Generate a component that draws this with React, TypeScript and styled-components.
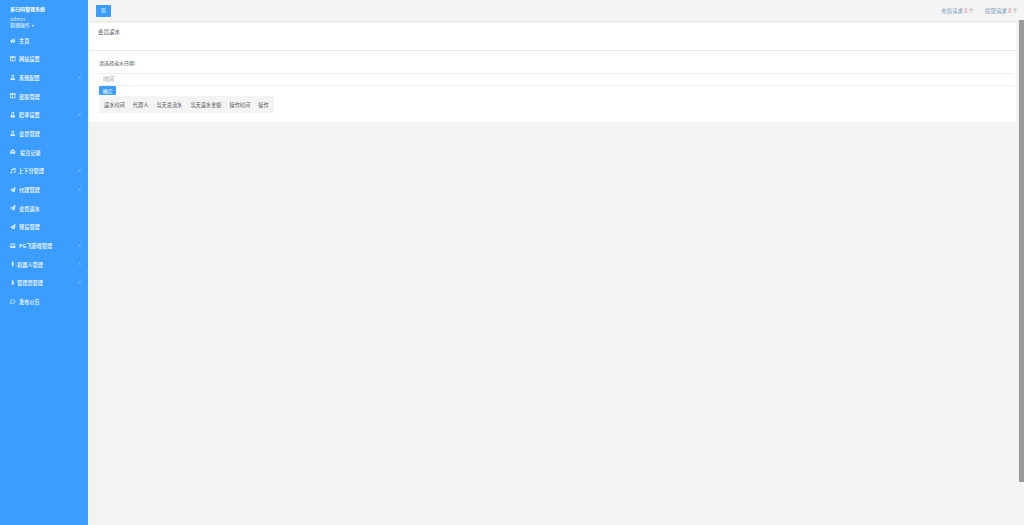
import styled, { createGlobalStyle } from 'styled-components'
import {
  FaBars,
  FaChevronLeft,
  FaColumns,
  FaCreditCard,
  FaFlask,
  FaHome,
  FaMale,
  FaMusic,
  FaPaperPlane,
  FaRegCommentDots,
  FaTaxi,
} from 'react-icons/fa'

const GlobalStyle = createGlobalStyle`
  html, body {
    margin: 0;
    height: 100%;
    overflow: hidden;
  }
  body {
    font-family: "Noto Sans CJK SC", "Liberation Sans", sans-serif;
    background: #f4f3f4;
    color: #676a6c;
  }
`

const Page = styled.div`
  display: flex;
  height: 525px;
  position: relative;
`

const Sidebar = styled.nav`
  width: 88px;
  flex-shrink: 0;
  background: #3a9dff;
  color: #fff;
`

const Profile = styled.div`
  padding: 6px 10px 0;
  height: 25px;
  font-size: 5px;
  line-height: 6px;
`

const Brand = styled.div`
  font-weight: 700;
  margin-bottom: 4px;
`

const Muted = styled.div`
  color: #dcecff;
`

const Caret = styled.span`
  display: inline-block;
  margin-left: 2px;
  border-left: 1.5px solid transparent;
  border-right: 1.5px solid transparent;
  border-top: 2px solid #fff;
  vertical-align: middle;
`

const MenuList = styled.ul`
  list-style: none;
  margin: 0;
  padding: 0;
`

const MenuItem = styled.li`
  display: flex;
  align-items: center;
  height: 18.65px;
  padding: 0 7px 0 10px;
  font-size: 5.2px;
  font-weight: 700;
  color: #e3f0ff;
`

const ItemIcon = styled.span<{ $width: number }>`
  width: ${(p) => p.$width}px;
  display: inline-flex;
  align-items: center;
  font-size: 5.5px;
`

const ItemLabel = styled.span`
  flex: 1;
`

const Arrow = styled(FaChevronLeft)`
  font-size: 3.5px;
  opacity: 0.7;
`

const Main = styled.div`
  flex: 1;
  min-width: 0;
  display: flex;
  flex-direction: column;
`

const TopBar = styled.header`
  height: 21px;
  flex-shrink: 0;
  display: flex;
  align-items: center;
  justify-content: space-between;
  padding: 0 6px 0 8px;
  background: #f3f4f3;
  border-bottom: 1px solid #e7eaec;
`

const MenuButton = styled.button`
  width: 15px;
  height: 12px;
  padding: 0;
  border: 0;
  border-radius: 1px;
  background: #3a9dff;
  color: #fff;
  font-size: 5px;
  display: flex;
  align-items: center;
  justify-content: center;
`

const Requests = styled.div`
  display: flex;
  gap: 11px;
  font-size: 5.5px;
  color: #7b9cbd;
`

const Count = styled.b`
  color: #e77;
  font-weight: 400;
`

const Unit = styled.span`
  color: #999;
`

const Card = styled.section`
  margin: 1px 8px 0 2px;
  background: #fff;
`

const CardTitle = styled.h5`
  margin: 0;
  height: 28px;
  padding: 5px 8px 0;
  box-sizing: border-box;
  font-size: 5.5px;
  line-height: 8px;
  font-weight: 400;
  color: #555;
  border-bottom: 1px solid #e7eaec;
`

const CardBody = styled.div`
  padding: 8px 9px 9px;
`

const Prompt = styled.label`
  display: block;
  font-size: 5px;
  line-height: 7px;
  margin-bottom: 7px;
  color: #555;
`

const DateInput = styled.div`
  height: 11px;
  padding: 0 5px;
  margin: 0 -7px 0 -1px;
  font-size: 5.5px;
  line-height: 11px;
  color: #999;
  background: #fff;
  border-top: 1px solid #eee;
  border-bottom: 1px solid #eee;
`

const Confirm = styled.button`
  display: block;
  width: 17px;
  height: 9px;
  padding: 0;
  border: 0;
  border-radius: 1px;
  background: #3a9dff;
  color: #fff;
  font: inherit;
  font-size: 5px;
  line-height: 9px;
`

const Table = styled.div`
  display: flex;
  width: fit-content;
  gap: 8px;
  height: 17px;
  align-items: center;
  padding: 0 5px;
  margin-top: 1px;
  background: #f4f4f5;
  font-size: 5.2px;
  color: #555;
`

const Scrollbar = styled.div`
  position: absolute;
  top: 20px;
  right: 0;
  width: 5px;
  height: 462px;
  background: #9a9a9a;
`

const menu = [
  { icon: <FaHome />, label: '主页', width: 9 },
  { icon: <FaColumns />, label: '网站设置', width: 9 },
  { icon: <FaFlask />, label: '系统配置', width: 9, more: true },
  { icon: <FaColumns />, label: '皮肤管理', width: 9 },
  { icon: <FaFlask />, label: '赔率设置', width: 9, more: true },
  { icon: <FaFlask />, label: '会员管理', width: 9 },
  { icon: <FaTaxi />, label: '投注记录', width: 10 },
  { icon: <FaMusic />, label: '上下分管理', width: 8, more: true },
  { icon: <FaPaperPlane />, label: '代理管理', width: 9, more: true },
  { icon: <FaPaperPlane />, label: '会员返水', width: 9 },
  { icon: <FaPaperPlane />, label: '预设管理', width: 9 },
  { icon: <FaCreditCard />, label: 'PG飞游戏管理', width: 9, more: true },
  { icon: <FaMale />, label: '机器人管理', width: 7, more: true },
  { icon: <FaMale />, label: '管理员管理', width: 7, more: true },
  { icon: <FaRegCommentDots />, label: '发布公告', width: 9 },
]

const columns = ['返水时间', '代理人', '当天总流水', '当天返水金额', '操作时间', '操作']

export default function App() {
  return (
    <Page>
      <GlobalStyle />
      <Sidebar>
        <Profile>
          <Brand>多扫码管理系统</Brand>
          <Muted>admin</Muted>
          <div>
            管理操作
            <Caret />
          </div>
        </Profile>
        <MenuList>
          {menu.map((item) => (
            <MenuItem key={item.label}>
              <ItemIcon $width={item.width}>{item.icon}</ItemIcon>
              <ItemLabel>{item.label}</ItemLabel>
              {item.more && <Arrow />}
            </MenuItem>
          ))}
        </MenuList>
      </Sidebar>
      <Main>
        <TopBar>
          <MenuButton>
            <FaBars />
          </MenuButton>
          <Requests>
            <span>
              充值请求 <Count>0</Count> <Unit>个</Unit>
            </span>
            <span>
              提现请求 <Count>0</Count> <Unit>个</Unit>
            </span>
          </Requests>
        </TopBar>
        <Card>
          <CardTitle>会员返水</CardTitle>
          <CardBody>
            <Prompt>请选择返水日期:</Prompt>
            <DateInput>时间</DateInput>
            <Confirm>确定</Confirm>
            <Table>
              {columns.map((c) => (
                <span key={c}>{c}</span>
              ))}
            </Table>
          </CardBody>
        </Card>
      </Main>
      <Scrollbar />
    </Page>
  )
}
